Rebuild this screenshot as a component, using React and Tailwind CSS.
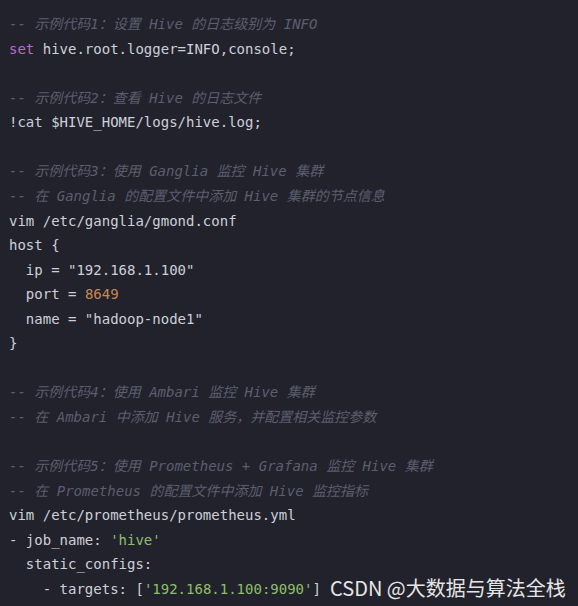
import React from "react";

const C = ({ children }) => (
  <span className="italic text-[#5b5e6e]">{children}</span>
);
const P = ({ children }) => <span className="text-[#b86ad0]">{children}</span>;
const O = ({ children }) => <span className="text-[#c78a52]">{children}</span>;
const G = ({ children }) => <span className="text-[#8fbf6a]">{children}</span>;

const lines = [
  <C>-- 示例代码1：设置 Hive 的日志级别为 INFO</C>,
  <><P>set</P> hive.root.logger=INFO,console;</>,
  null,
  <C>-- 示例代码2：查看 Hive 的日志文件</C>,
  <>!cat $HIVE_HOME/logs/hive.log;</>,
  null,
  <C>-- 示例代码3：使用 Ganglia 监控 Hive 集群</C>,
  <C>-- 在 Ganglia 的配置文件中添加 Hive 集群的节点信息</C>,
  <>vim /etc/ganglia/gmond.conf</>,
  <>host {"{"}</>,
  <>{"  "}ip = "192.168.1.100"</>,
  <>{"  "}port = <O>8649</O></>,
  <>{"  "}name = "hadoop-node1"</>,
  <>{"}"}</>,
  null,
  <C>-- 示例代码4：使用 Ambari 监控 Hive 集群</C>,
  <C>-- 在 Ambari 中添加 Hive 服务，并配置相关监控参数</C>,
  null,
  <C>-- 示例代码5：使用 Prometheus + Grafana 监控 Hive 集群</C>,
  <C>-- 在 Prometheus 的配置文件中添加 Hive 监控指标</C>,
  <>vim /etc/prometheus/prometheus.yml</>,
  <>- job_name: <G>'hive'</G></>,
  <>{"  "}static_configs:</>,
  <>{"    "}- targets: [<G>'192.168.1.100:9090'</G>]</>,
];

export default function App() {
  return (
    <div className="relative w-[578px] h-[606px] overflow-hidden bg-[#22222c]">
      <pre
        className="m-0 pt-[12px] pl-[9px] text-[14px] leading-[24.57px] text-[#cdd0d8] whitespace-pre"
        style={{ fontFamily: '"DejaVu Sans Mono", "Noto Sans CJK SC", monospace' }}
      >
        {lines.map((l, i) => (
          <div key={i} className="h-[24.57px]">
            {l ?? " "}
          </div>
        ))}
      </pre>
      <div
        className="absolute left-[330px] top-[574px] text-[20px] leading-[28px] text-[#e6e6e6] whitespace-nowrap"
        style={{ fontFamily: '"Noto Sans CJK SC", "Noto Sans", sans-serif' }}
      >
        CSDN @大数据与算法全栈
      </div>
    </div>
  );
}
